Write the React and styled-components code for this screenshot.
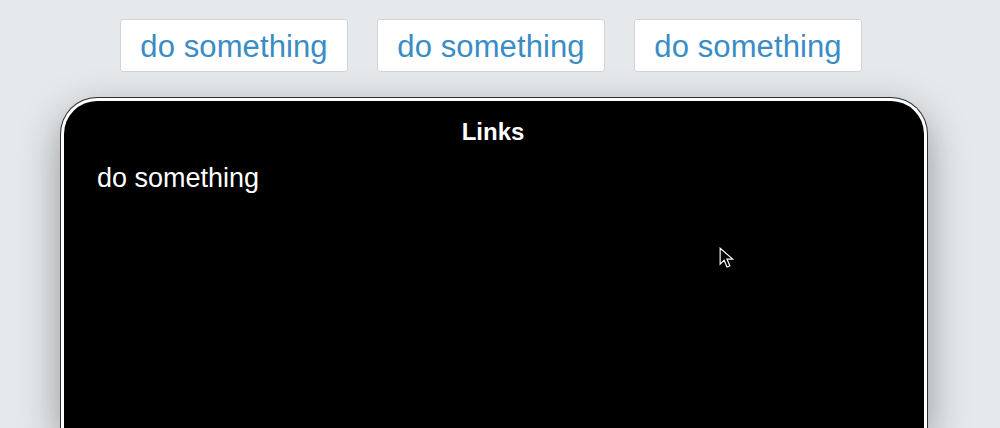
import React from 'react'
import styled, { createGlobalStyle } from 'styled-components'

const GlobalStyle = createGlobalStyle`
  html, body {
    margin: 0;
    padding: 0;
    background: #e6e9ec;
    font-family: "Liberation Sans", Arial, Helvetica, sans-serif;
    overflow: hidden;
  }
`

const Page = styled.div`
  width: 1000px;
  height: 428px;
  display: flex;
  flex-direction: column;
  padding-top: 19px;
  box-sizing: border-box;
`

const ButtonRow = styled.div`
  display: flex;
  gap: 29px;
  margin-left: 120px;
`

const Button = styled.button`
  width: 228px;
  height: 53px;
  background: #ffffff;
  border: 1px solid #cfd5db;
  border-radius: 3px;
  color: #3a8cc5;
  font-family: "Liberation Sans", Arial, sans-serif;
  font-size: 31px;
  letter-spacing: 0.1px;
  padding: 2px 0 0;
  display: flex;
  align-items: center;
  justify-content: center;
  cursor: pointer;
`

const Device = styled.div`
  position: relative;
  margin: 26px 0 0 61px;
  width: 860px;
  height: 420px;
  background: #000;
  border: 3px solid #ffffff;
  border-bottom: none;
  border-radius: 36px 36px 0 0;
  box-shadow: 0 0 0 1px #2c2f33, 0 14px 40px rgba(0, 0, 0, 0.38);
  display: flex;
  flex-direction: column;
`

const Title = styled.div`
  color: #ffffff;
  font-weight: bold;
  font-size: 24px;
  line-height: 1.2;
  text-align: center;
  padding-top: 17px;
  margin-left: -2px;
`

const LinkItem = styled.div`
  color: #ffffff;
  font-size: 27px;
  line-height: 1.2;
  margin-top: 15px;
  padding-left: 33px;
`

const Pointer = styled.svg`
  position: absolute;
  left: 655px;
  top: 146px;
`

const App = () => {
  return (
    <Page>
      <GlobalStyle />
      <ButtonRow>
        <Button>do something</Button>
        <Button>do something</Button>
        <Button>do something</Button>
      </ButtonRow>
      <Device>
        <Title>Links</Title>
        <LinkItem>do something</LinkItem>
        <Pointer width="16" height="23" viewBox="0 0 14 20">
          <path
            d="M1 1 L1 15 L4.5 11.5 L7 17.5 L9.5 16.5 L7 10.5 L12 10.5 Z"
            fill="#000"
            stroke="#fff"
            strokeWidth="1"
            strokeLinejoin="miter"
          />
        </Pointer>
      </Device>
    </Page>
  )
}

export default App
